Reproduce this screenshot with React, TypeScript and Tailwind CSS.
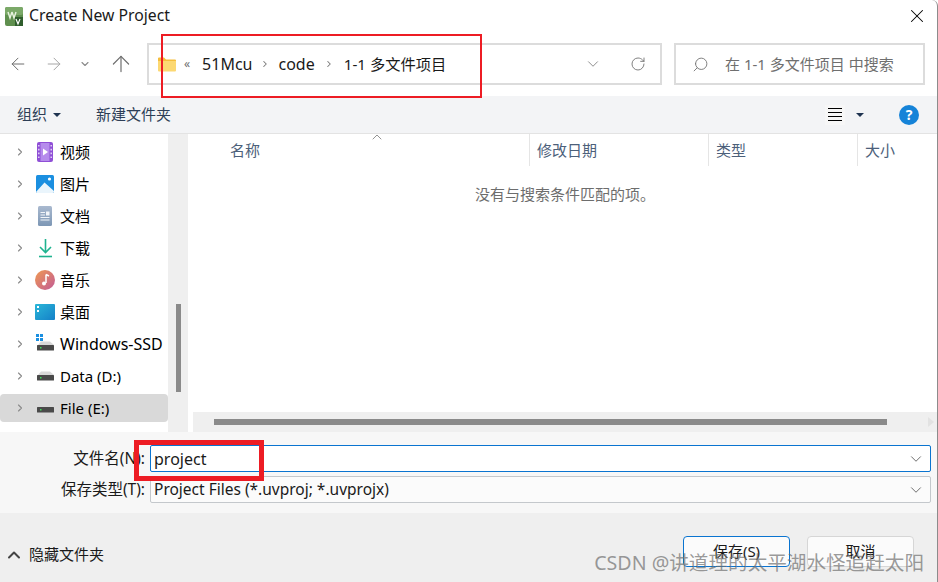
import { ArrowLeft, ArrowRight, ArrowUp, ChevronDown, ChevronRight, ChevronUp, RotateCw, Search, X } from "lucide-react";
import type { ReactNode } from "react";

function AppIcon() {
  return (
    <svg width="18" height="19" viewBox="0 0 18 19" className="shrink-0">
      <rect x="0" y="0" width="18" height="19" rx="2" fill="#5f8f4e" />
      <rect x="0" y="0" width="18" height="8" rx="2" fill="#7ba968" />
      <path d="M3 5 L5 11 L7 5 M7 5 L9 11 L11 5" stroke="#e8f3df" strokeWidth="1.4" fill="none" />
      <rect x="10" y="10" width="8" height="9" fill="#2f5d2c" />
      <path d="M11 12 L13 17 L15 12" stroke="#ffffff" strokeWidth="1.2" fill="none" />
    </svg>
  );
}

function FolderIcon() {
  return (
    <svg width="18" height="15" viewBox="0 0 18 15" className="shrink-0">
      <path d="M0 1.5 A1 1 0 0 1 1 .5 H6 L8 2.5 H17 A1 1 0 0 1 18 3.5 V5 H0 Z" fill="#f5bd3c" />
      <path d="M0 4 H18 V13.5 A1 1 0 0 1 17 14.5 H1 A1 1 0 0 1 0 13.5 Z" fill="#fcd872" />
    </svg>
  );
}

function VideoIcon() {
  return (
    <svg width="18" height="20" viewBox="0 0 18 20">
      <rect width="16" height="20" x="1" rx="2" fill="#8f4fd6" />
      <rect x="4.5" y="1" width="9" height="18" fill="#b68cec" />
      <path d="M7 6.5 L12 10 L7 13.5 Z" fill="#ffffff" />
      <path d="M2.8 3 V17" stroke="#e8dcf8" strokeWidth="1.4" strokeDasharray="1.6 2.2" />
      <path d="M15.2 3 V17" stroke="#e8dcf8" strokeWidth="1.4" strokeDasharray="1.6 2.2" />
    </svg>
  );
}

function PictureIcon() {
  return (
    <svg width="18" height="18" viewBox="0 0 18 18">
      <rect width="18" height="18" rx="1.5" fill="#1b8fe0" />
      <path d="M0 17 L8.5 7.5 L18 16 V16.5 A1.5 1.5 0 0 1 16.5 18 H1.5 A1.5 1.5 0 0 1 0 16.5 Z" fill="#eaf5fc" />
      <circle cx="13.5" cy="4" r="1.6" fill="#ffffff" />
    </svg>
  );
}

function DocIcon() {
  return (
    <svg width="15" height="20" viewBox="0 0 15 20">
      <defs>
        <linearGradient id="doc" x1="0" y1="0" x2="0" y2="1">
          <stop offset="0" stopColor="#a9b9cf" />
          <stop offset="1" stopColor="#7d97b5" />
        </linearGradient>
      </defs>
      <rect width="14" height="20" rx="1.5" fill="url(#doc)" />
      <path d="M2.5 6.5 H7 M2.5 9 H7 M2.5 11.5 H11.5 M2.5 14 H11.5" stroke="#f2f5f9" strokeWidth="1.2" />
      <rect x="8" y="5.5" width="3.5" height="4" fill="#f2f5f9" />
    </svg>
  );
}

function DownloadIcon() {
  return (
    <svg width="15" height="20" viewBox="0 0 15 20">
      <path d="M7.5 1 V14 M2 9 L7.5 14.5 L13 9" stroke="#1fb38f" strokeWidth="1.6" fill="none" />
      <path d="M1 18.5 H14" stroke="#1fb38f" strokeWidth="1.6" />
    </svg>
  );
}

function MusicIcon() {
  return (
    <svg width="20" height="20" viewBox="0 0 20 20">
      <defs>
        <linearGradient id="music" x1="0" y1="0" x2="1" y2="1">
          <stop offset="0" stopColor="#ef9a52" />
          <stop offset="1" stopColor="#c25a96" />
        </linearGradient>
      </defs>
      <circle cx="10" cy="10" r="10" fill="url(#music)" />
      <path d="M11 4.5 V13 M11 4.5 L14 6" stroke="#ffffff" strokeWidth="1.5" fill="none" />
      <circle cx="9" cy="13.5" r="2" fill="#ffffff" />
    </svg>
  );
}

function DesktopIcon() {
  return (
    <svg width="20" height="16" viewBox="0 0 20 16">
      <defs>
        <linearGradient id="desk" x1="0" y1="0" x2="1" y2="1">
          <stop offset="0" stopColor="#2bb7d8" />
          <stop offset="1" stopColor="#1480c8" />
        </linearGradient>
      </defs>
      <rect width="20" height="16" rx="1" fill="url(#desk)" />
      <rect x="2" y="2" width="2" height="2" fill="#ffffff" />
      <rect x="2" y="6" width="2" height="2" fill="#ffffff" />
    </svg>
  );
}

function DriveBody() {
  return (
    <>
      <path d="M2 11 L5 7.5 H14 L18 11 Z" fill="#d9d9d9" />
      <rect x="1" y="11" width="17" height="5.5" rx="0.5" fill="#4a4a4a" />
      <rect x="4" y="13" width="1.5" height="1.5" fill="#3fe05a" />
    </>
  );
}

function DriveIcon() {
  return (
    <svg width="19" height="10" viewBox="0 7 19 10">
      <DriveBody />
    </svg>
  );
}

function SystemDriveIcon() {
  return (
    <svg width="19" height="17" viewBox="0 0 19 17" className="-mt-[3px]">
      <g fill="#1b8fe0">
        <rect x="0" y="0" width="3" height="3" />
        <rect x="4" y="0" width="3" height="3" />
        <rect x="0" y="4" width="3" height="3" />
        <rect x="4" y="4" width="3" height="3" />
      </g>
      <DriveBody />
    </svg>
  );
}

const navItems: { label: string; icon: ReactNode; selected?: boolean; wide?: boolean }[] = [
  { label: "视频", icon: <VideoIcon /> },
  { label: "图片", icon: <PictureIcon /> },
  { label: "文档", icon: <DocIcon /> },
  { label: "下载", icon: <DownloadIcon /> },
  { label: "音乐", icon: <MusicIcon /> },
  { label: "桌面", icon: <DesktopIcon /> },
  { label: "Windows-SSD", icon: <SystemDriveIcon />, wide: true },
  { label: "Data (D:)", icon: <DriveIcon /> },
  { label: "File (E:)", icon: <DriveIcon />, selected: true },
];

function NavRow({ label, icon, selected, wide }: { label: string; icon: ReactNode; selected?: boolean; wide?: boolean }) {
  return (
    <div className="h-8 flex items-center">
      <div className={`h-7 w-full flex items-center rounded-sm ${selected ? "bg-[#d9d9d9]" : ""}`}>
        <ChevronRight className="ml-[14px] w-[12px] h-[12px] text-[#8a8a8a] shrink-0" strokeWidth={2.2} />
        <div className="ml-[9px] w-[20px] flex justify-center">{icon}</div>
        <span className={`ml-[5px] text-black whitespace-nowrap ${wide ? "text-[16px]" : "text-[15px]"}`}>{label}</span>
      </div>
    </div>
  );
}

function Column({ label, width, sep = true }: { label: string; width: string; sep?: boolean }) {
  return (
    <div className={`h-8 flex items-center pl-[7px] text-[15px] text-[#4c607a] ${width} ${sep ? "border-r border-[#e5e5e5]" : ""}`}>
      {label}
    </div>
  );
}

export default function App() {
  return (
    <div
      className="relative w-[938px] h-[582px] overflow-hidden bg-white flex flex-col border-r border-[#8c8c8c] rounded-tr-[6px]"
      style={{ fontFamily: '"Noto Sans", "Noto Sans CJK SC", sans-serif' }}
    >
      {/* title bar */}
      <div className="h-[32px] flex items-center pl-[5px] pr-[9px]">
        <AppIcon />
        <span className="ml-[6px] text-[15.75px] text-[#1a1a1a]">Create New Project</span>
        <X className="ml-auto w-[22px] h-[22px] text-black" strokeWidth={1.1} />
      </div>

      {/* address row */}
      <div className="h-[64px] flex items-center pl-[8px]">
        <ArrowLeft className="w-[20px] h-[20px] text-[#6e6e6e] shrink-0" strokeWidth={1.2} />
        <ArrowRight className="ml-[16px] w-[20px] h-[20px] text-[#a6a6a6] shrink-0" strokeWidth={1.2} />
        <ChevronDown className="ml-[15px] w-[12px] h-[12px] text-[#8a8a8a] shrink-0" strokeWidth={2.2} />
        <ArrowUp className="ml-[17px] w-[26px] h-[26px] text-[#6e6e6e] shrink-0" strokeWidth={1.1} />
        <div className="ml-[13px] w-[515px] h-[42px] shrink-0 border-2 border-[#dcdcdc] flex items-center pl-[9px] pr-[14px]">
          <FolderIcon />
          <span className="ml-[8px] text-[12px] text-[#6e6e6e]">«</span>
          <span className="ml-[12px] text-[16px] text-[#1a1a1a]">51Mcu</span>
          <ChevronRight className="ml-[7px] w-[10px] h-[10px] text-[#777777] shrink-0" strokeWidth={2.5} />
          <span className="ml-[9px] text-[16px] text-[#1a1a1a]">code</span>
          <ChevronRight className="ml-[9px] w-[10px] h-[10px] text-[#777777] shrink-0" strokeWidth={2.5} />
          <span className="ml-[10px] text-[15.25px] text-[#1a1a1a] whitespace-nowrap">1-1 多文件项目</span>
          <ChevronDown className="ml-auto w-[18px] h-[18px] text-[#777777] shrink-0" strokeWidth={1.1} />
          <RotateCw className="ml-[28px] w-[16px] h-[16px] text-[#777777] shrink-0" strokeWidth={1.4} />
        </div>
        <div className="ml-[12px] w-[251px] h-[42px] shrink-0 border-2 border-[#dcdcdc] flex items-center pl-[16px]">
          <Search className="w-[17px] h-[17px] text-[#777777] -scale-x-100 shrink-0" strokeWidth={1.3} />
          <span className="ml-[16px] text-[15px] text-[#6f6f6f] whitespace-nowrap">在 1-1 多文件项目 中搜索</span>
        </div>
      </div>

      {/* toolbar */}
      <div className="h-[38px] bg-[#f3f4f6] border-b border-[#e3e3e3] flex items-center pl-[17px] pr-[17px]">
        <span className="text-[15px] text-[#2d3e56]">组织</span>
        <span className="ml-[6px] w-0 h-0 border-x-[4px] border-x-transparent border-t-[4px] border-t-[#1f3350]" />
        <span className="ml-[35px] text-[15px] text-[#2d3e56]">新建文件夹</span>
        <div className="ml-auto flex items-center">
          <div className="w-[20px] h-[20px] bg-[#f7f7f7] flex flex-col items-center justify-center gap-[3px]">
            <span className="w-[14px] h-px bg-black" />
            <span className="w-[14px] h-px bg-black" />
            <span className="w-[14px] h-px bg-black" />
            <span className="w-[14px] h-px bg-black" />
          </div>
          <span className="ml-[11px] w-0 h-0 border-x-[4px] border-x-transparent border-t-[4px] border-t-[#1f3350]" />
          <div className="ml-[35px] mr-[1px] w-[20px] h-[20px] rounded-full bg-[#1583d8] text-white text-[14px] font-bold flex items-center justify-center">?</div>
        </div>
      </div>

      {/* body */}
      <div className="h-[298px] flex">
        <div className="w-[168px] pt-[2px] flex flex-col">
          {navItems.map((item) => (
            <NavRow key={item.label} {...item} />
          ))}
        </div>
        <div className="w-[20px] bg-[#efefef] flex justify-center pt-[170px]">
          <div className="w-[5px] h-[88px] bg-[#8a8a8a]" />
        </div>
        <div className="flex-1 min-w-0 flex flex-col pl-[5px]">
          <div className="flex-1 relative">
            <div className="flex">
              <div className="h-8 w-[337px] border-r border-[#e5e5e5] flex items-center pl-[37px] text-[15px] text-[#4c607a]">名称</div>
              <Column label="修改日期" width="w-[179px]" />
              <Column label="类型" width="w-[149px]" />
              <Column label="大小" width="w-[70px]" sep={false} />
            </div>
            <ChevronUp className="absolute left-[176px] top-[-5px] w-[16px] h-[16px] text-[#777777]" strokeWidth={1.2} />
            <div className="mt-[17px] text-center text-[15px] text-[#6d6d6d]">没有与搜索条件匹配的项。</div>
          </div>
          <div className="h-[20px] bg-[#efefef] flex items-center pl-[21px]">
            <div className="w-[673px] h-[6px] bg-[#8a8a8a]" />
            <span className="ml-auto mr-[3px] w-0 h-0 border-y-[5px] border-y-transparent border-l-[6px] border-l-[#e2e2e2]" />
          </div>
        </div>
      </div>

      {/* file name + type */}
      <div className="h-[81px] bg-[#f7f7f7] pt-[13px] pr-[6px] flex flex-col gap-[4px]">
        <div className="h-[27px] flex items-center">
          <span className="w-[145px] text-right text-[15.5px] text-[#1a1a1a] whitespace-nowrap">文件名(N):</span>
          <div className="ml-[5px] flex-1 h-full bg-white border border-[#0a74d0] rounded-[2px] flex items-center pl-[3px] pr-[5px]">
            <span className="text-[16px] text-[#1a1a1a]">project</span>
            <ChevronDown className="ml-auto w-[18px] h-[18px] text-[#5f5f5f]" strokeWidth={1.2} />
          </div>
        </div>
        <div className="h-[27px] flex items-center">
          <span className="w-[145px] text-right text-[15.5px] text-[#1a1a1a] whitespace-nowrap">保存类型(T):</span>
          <div className="ml-[5px] flex-1 h-full bg-[#fbfbfb] border border-[#c4c8cc] rounded-[2px] flex items-center pl-[3px] pr-[5px]">
            <span className="text-[15.5px] text-[#1a1a1a]">Project Files (*.uvproj; *.uvprojx)</span>
            <ChevronDown className="ml-auto w-[18px] h-[18px] text-[#5f5f5f]" strokeWidth={1.2} />
          </div>
        </div>
      </div>

      {/* footer */}
      <div className="flex-1 bg-[#efefef] flex items-start pt-[23px] pl-[4px] pr-[23px]">
        <div className="h-[31px] mt-[3px] flex items-center">
          <ChevronUp className="w-[20px] h-[20px] text-[#444444]" strokeWidth={2.4} />
          <span className="ml-[5px] text-[15px] text-[#1a1a1a]">隐藏文件夹</span>
        </div>
        <div className="ml-auto flex gap-[17px]">
          <div className="w-[107px] h-[31px] bg-[#fbfbfb] border border-[#0a74d0] rounded-[4px] flex items-center justify-center text-[15px] text-[#1a1a1a]">保存(S)</div>
          <div className="w-[107px] h-[31px] bg-[#fbfbfb] border border-[#d6d6d6] rounded-[4px] flex items-center justify-center text-[15px] text-[#1a1a1a]">取消</div>
        </div>
      </div>

      {/* red annotations */}
      <div className="absolute left-[161px] top-[34px] w-[321px] h-[64px] border-2 border-[#ed1c24]" />
      <div className="absolute left-[134px] top-[440px] w-[130px] h-[41px] border-[5px] border-[#ed1c24]" />

      {/* watermark */}
      <div className="absolute right-[13px] top-[548px] text-[19.6px] leading-[30px] text-[#6e6e6e]/70 whitespace-nowrap">CSDN @讲道理的太平湖水怪追赶太阳</div>
    </div>
  );
}
